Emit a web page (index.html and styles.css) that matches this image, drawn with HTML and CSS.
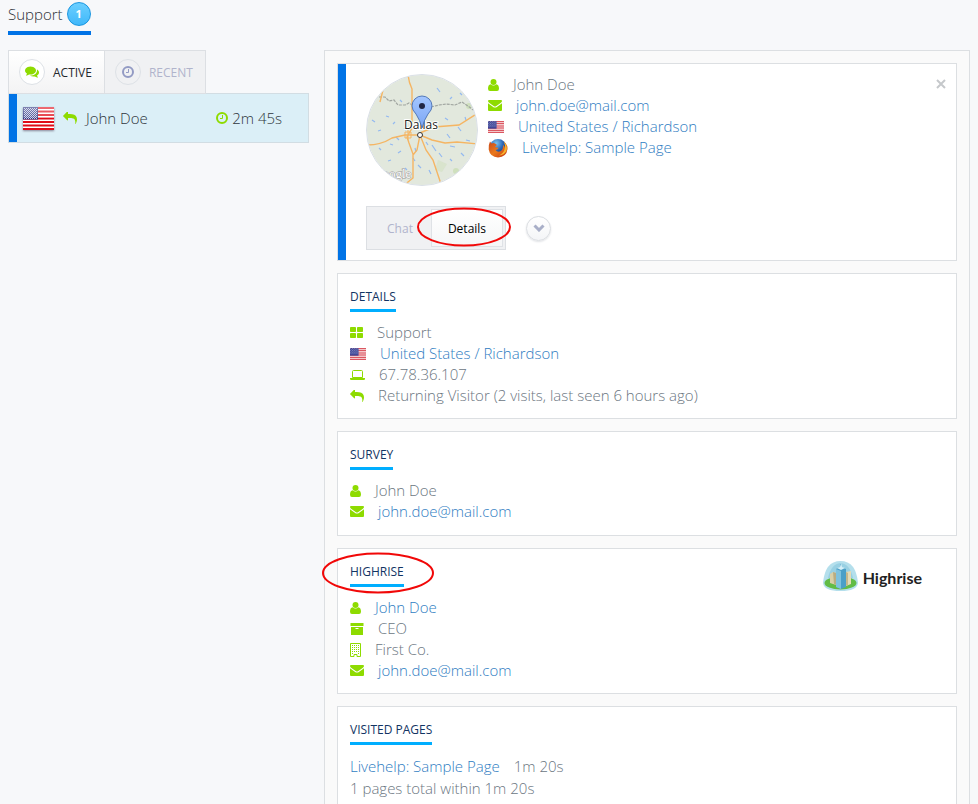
FILE: index.html
```html
<!DOCTYPE html>
<html lang="en">
<head>
<meta charset="utf-8">
<title>Support</title>
<link rel="stylesheet" href="styles.css">
</head>
<body>
<svg class="defs" aria-hidden="true">
  <defs>
    <linearGradient id="pin-fill" x1="0" y1="0" x2="0" y2="1"><stop offset="0" stop-color="#a4c6ff"/><stop offset="1" stop-color="#7ba6f5"/></linearGradient>
    <linearGradient id="flag-shine" x1="0" y1="0" x2="0" y2="1"><stop offset="0" stop-color="#fff" stop-opacity=".4"/><stop offset=".5" stop-color="#fff" stop-opacity=".2"/><stop offset=".5" stop-color="#fff" stop-opacity="0"/></linearGradient>
    <radialGradient id="fox-globe" cx=".4" cy=".25" r=".8"><stop offset="0" stop-color="#7cc4f0"/><stop offset=".5" stop-color="#2b64b4"/><stop offset="1" stop-color="#132b6b"/></radialGradient>
    <linearGradient id="fox-fur" x1="0" y1="0" x2="1" y2="1"><stop offset="0" stop-color="#c8481c"/><stop offset=".5" stop-color="#ea7a1c"/><stop offset="1" stop-color="#c22f10"/></linearGradient>
    <pattern id="stars" width="2" height="2" patternUnits="userSpaceOnUse"><rect width="1" height="1" fill="#c5cae6"/><rect x="1" y="1" width="1" height="1" fill="#c5cae6"/></pattern>
  </defs>
  <symbol id="user" viewBox="0 0 11 12"><circle cx="5.500" cy="3" r="3"/><path d="M2.700 5.200Q5.500 7.800 8.300 5.200Q11 5.600 11 9.700Q11 12 9 12H2Q0 12 0 9.700Q0 5.600 2.700 5.200Z"/></symbol>
  <symbol id="mail" viewBox="0 0 14 11"><path d="M1 0H13Q14 0 14 1Q14 2 12.600 3L8 6.200Q7 6.800 6 6.200L1.400 3Q0 2 0 1Q0 0 1 0ZM0 3.200L5.500 7.200Q7 8 8.500 7.200L14 3.200V10Q14 11 13 11H1Q0 11 0 10Z"/></symbol>
  <symbol id="reply" viewBox="0 128 1792 1536"><path d="M1792 1120q0 166-127 451-3 7-10.500 24t-13.500 30-13 22q-12 17-28 17-15 0-23.500-10t-8.500-25q0-9 2.500-26.500t2.500-23.500q5-68 5-123 0-101-17.500-181t-48.500-138.500-80-101-105.500-69.500-133-42.500-154-21.500-175.500-6h-224v256q0 26-19 45t-45 19-45-19l-512-512q-19-19-19-45t19-45l512-512q19-19 45-19t45 19 19 45v256h224q713 0 875 403 53 134 53 333z"/></symbol>
  <symbol id="comments" viewBox="0 256 1792 1408"><path d="M1408 768q0 139-94 257t-256.500 186.500-353.500 68.500q-86 0-176-16-124 88-278 128-36 9-86 16h-3q-11 0-20.500-8t-11.500-21q-1-3-1-6.500t.5-6.500 2-6l2.500-5 3.500-5.500 4-5 4.500-5 4-4.500q5-6 23-25t26-29.500 22.500-29 25-38.500 20.500-44q-124-72-195-177t-71-224q0-139 94-257t256.500-186.500 353.500-68.500 353.500 68.500 256.500 186.500 94 257zm384 256q0 120-71 224.500t-195 176.500q10 24 20.500 44t25 38.500 22.500 29 26 29.500 23 25q1 1 4 4.500t4.500 5 4 5 3.500 5.500l2.500 5 2 6 .5 6.500-1 6.500q-3 14-13 22t-22 7q-50-7-86-16-154-40-278-128-90 16-176 16-271 0-472-132 58 4 88 4 161 0 309-45t264-129q125-92 192-212t67-254q0-77-23-152 129 71 204 178t75 230z"/></symbol>
  <symbol id="clock" viewBox="0 0 12 12"><circle cx="6" cy="6" r="5" fill="none" stroke="currentColor" stroke-width="2"/><path d="M6.500 3V6.500H4" fill="none" stroke="currentColor"/></symbol>
  <symbol id="windows" viewBox="0 0 13 11"><rect width="6" height="5" rx=".8"/><rect x="7" width="6" height="5" rx=".8"/><rect y="6" width="6" height="5" rx=".8"/><rect x="7" y="6" width="6" height="5" rx=".8"/></symbol>
  <symbol id="laptop" viewBox="0 0 15 10"><path d="M2.500 7.500V1.500Q2.500 .5 3.500 .5H11.500Q12.500 .5 12.500 1.500V7.500Z" fill="none" stroke="currentColor"/><path d="M0 8H15V9Q15 10 13.800 10H1.200Q0 10 0 9Z"/></symbol>
  <symbol id="archive" viewBox="0 0 14 12"><path d="M.5 0H13.500V3H.5ZM1 4H13V12H1ZM5.500 5V6H8.500V5Z" fill-rule="evenodd"/></symbol>
  <symbol id="building" viewBox="0 0 11 14"><path d="M.5 .5H10.500V13.500H7V11.500H4V13.500H.5Z" fill="none" stroke="currentColor"/><path d="M2 2.500H9M2 4.500H9M2 6.500H9M2 8.500H9" fill="none" stroke="currentColor" stroke-dasharray="1 1"/><path d="M2 10H3V11H2ZM8 10H9V11H8Z"/></symbol>
  <symbol id="flag" viewBox="0 0 31 23"><rect width="31" height="23" fill="#fff"/><path d="M0 1H31M0 4.500H31M0 8H31M0 11.500H31M0 15H31M0 18.500H31M0 22H31" stroke="#e00b18" stroke-width="2"/><rect width="15" height="12.500" fill="#2b3480"/><rect x="1" y="1" width="13" height="11" fill="url(#stars)"/><rect width="31" height="23" fill="url(#flag-shine)"/></symbol>
  <symbol id="flag-small" viewBox="0 0 15 11"><rect width="15" height="11" fill="#fff"/><path d="M0 .5H15M0 2.500H15M0 4.500H15M0 6.500H15M0 8.500H15M0 10.500H15" stroke="#d0202e"/><rect width="8" height="7" fill="#27308a"/><rect x="0" y="0" width="8" height="6" fill="url(#stars)" opacity=".6"/></symbol>
</svg>

<header class="topbar">
  <a class="queue" href="#support">Support <span class="count">1</span></a>
</header>

<main class="layout">
  <aside class="visitors">
    <nav class="tabs">
      <button class="tab tab-on" type="button"><span class="disc"><svg class="i-comments"><use href="#comments"/></svg></span>ACTIVE</button>
      <button class="tab" type="button"><span class="disc"><svg class="i-clock"><use href="#clock"/></svg></span>RECENT</button>
    </nav>
    <a class="visitor" href="#john">
      <svg class="i-flag-big"><use href="#flag"/></svg>
      <svg class="i-reply green"><use href="#reply"/></svg>
      <span class="visitor-name">John Doe</span>
      <span class="visitor-time"><svg class="i-clock green"><use href="#clock"/></svg>2m 45s</span>
    </a>
  </aside>

  <section class="panel">
    <article class="card summary">
      <div class="identity">
        <svg class="map" viewBox="0 0 112 112" role="img" aria-label="Map of Dallas">
          <clipPath id="round"><circle cx="56" cy="56" r="55"/></clipPath>
          <g clip-path="url(#round)">
            <rect width="112" height="112" fill="#e2e8dd"/>
            <g fill="#cfe0bd"><circle cx="103" cy="32" r="3"/><circle cx="90" cy="97" r="3"/><path d="M72 86l9 4-5 8-7-2z" opacity=".5"/></g>
            <path d="M6 46l3 2M12 57l3-1M20 42l3 1M24 70l3 1M30 63l3 3M38 54l2 2M32 79l3-2M49 74l1 4M52 91l3 3M60 68l2 3M66 71l4 6M73 79l3 4M81 60l3 4M84 72l5 1M92 53l3 4M95 79l3 3M63 96l2 4M39 94l2 2M27 50l2-2M71 14l3 4M84 25l2-2M94 19l2 2M79 44l3 2M99 43l1 3M34 26l2 2M13 74l2 2M22 87l3-1M100 66l4 1M84 85l2 2M47 84l2 3" fill="none" stroke="#93b9f0" stroke-width="1.200"/>
            <path d="M9 23h10l4 4 5-1 4 5h7l4-2 5 3 6-2M65 33l8-2 7-1 9 1 7-3 6 4 8 6" fill="none" stroke="#a0a5a0" stroke-width="1.200" stroke-dasharray="3 1"/>
            <g fill="none" stroke="#f5b563" stroke-width="1.400"><path d="M42 1Q43 9 46 15V54L41 63 43 69 47 80V104L37 112M17 16L14 28M1 71Q15 71 26 64L39 61 54 61 66 66 79 69 91 68 112 70M54 59L68 53 93 51 112 39M54 61L51 76 47 81M54 61L60 76 67 86 75 110"/><path d="M39 58H45V64H39ZM42 56V66" stroke-width="1"/></g>
            <text class="map-brand" x="7" y="104">Google</text>
            <text class="map-city" x="55" y="55">Dallas</text>
            <path d="M56 54Q54 46 50 40Q46 36 46 32A10 10 0 0 1 66 32Q66 36 62 40Q58 46 56 54Z" fill="url(#pin-fill)" stroke="#5379b9"/>
            <circle cx="56" cy="32" r="3" fill="#202645"/>
            <circle cx="54" cy="61" r="2.500" fill="#fff" stroke="#333"/>
          </g>
          <circle cx="56" cy="56" r="55.500" fill="none" stroke="#d9dfe5"/>
        </svg>
        <ul class="facts">
          <li><svg class="i-user green"><use href="#user"/></svg>John Doe</li>
          <li><svg class="i-mail green"><use href="#mail"/></svg><a href="mailto:john.doe@mail.com">john.doe@mail.com</a></li>
          <li><svg class="i-flag"><use href="#flag-small"/></svg><a href="#place">United States / Richardson</a></li>
          <li><svg class="i-fox" viewBox="0 0 20 20"><circle cx="10" cy="9.500" r="8.500" fill="url(#fox-globe)"/><path d="M2 3.500L3.500 5.500Q5.500 4.500 7 5.500L9 7Q7.500 8 7 9L10.500 10Q9.500 12 7.500 12Q9.500 14.500 12.500 13.200Q15.500 11.500 15 7Q16.800 8 17 10Q17.800 6 15.500 3.500Q20 6.500 19.500 11Q18.500 19 10 19.500Q2 19 .7 11.500Q.2 7 2 3.500Z" fill="url(#fox-fur)"/><path d="M15.500 3.500Q19.500 7 18.700 12Q17 17 11 17.500Q15.500 15 16.500 11.500Q18 7 15.500 3.500Z" fill="#f7b52c"/></svg><a href="#page">Livehelp: Sample Page</a></li>
        </ul>
        <button class="close" type="button" aria-label="Close"><svg viewBox="0 0 10 10"><path d="M1 1L9 9M9 1L1 9"/></svg></button>
      </div>
      <div class="controls">
        <div class="switch">
          <button class="choice" type="button">Chat</button>
          <button class="choice choice-on" type="button">Details</button>
          <svg class="ring ring-choice" viewBox="0 0 94 40"><ellipse cx="47" cy="20" rx="46" ry="18.500"/></svg>
        </div>
        <button class="more" type="button" aria-label="More"><svg viewBox="0 0 12 8"><path d="M1.500 1.500L6 6L10.500 1.500"/></svg></button>
      </div>
    </article>

    <article class="card">
      <h2>DETAILS</h2>
      <ul class="facts">
        <li><svg class="i-windows green"><use href="#windows"/></svg>Support</li>
        <li><svg class="i-flag"><use href="#flag-small"/></svg><a href="#place">United States / Richardson</a></li>
        <li><svg class="i-laptop green"><use href="#laptop"/></svg>67.78.36.107</li>
        <li><svg class="i-reply green"><use href="#reply"/></svg>Returning Visitor (2 visits, last seen 6 hours ago)</li>
      </ul>
    </article>

    <article class="card">
      <h2>SURVEY</h2>
      <ul class="facts">
        <li><svg class="i-user green"><use href="#user"/></svg>John Doe</li>
        <li><svg class="i-mail green"><use href="#mail"/></svg><a href="mailto:john.doe@mail.com">john.doe@mail.com</a></li>
      </ul>
    </article>

    <article class="card crm">
      <div>
        <h2>HIGHRISE<svg class="ring ring-title" viewBox="0 0 112 42"><ellipse cx="56" cy="21" rx="55" ry="19.500"/></svg></h2>
        <ul class="facts">
          <li><svg class="i-user green"><use href="#user"/></svg><a href="#contact">John Doe</a></li>
          <li><svg class="i-archive green"><use href="#archive"/></svg>CEO</li>
          <li><svg class="i-building green"><use href="#building"/></svg>First Co.</li>
          <li><svg class="i-mail green"><use href="#mail"/></svg><a href="mailto:john.doe@mail.com">john.doe@mail.com</a></li>
        </ul>
      </div>
      <div class="brand">
        <svg viewBox="0 0 37 30"><path d="M1 22Q3 0 18.500 0Q34 0 36 22Q35 30 18.500 30Q2 30 1 22Z" fill="#b4dfec"/><path d="M6 17Q9 3 18.500 2Q28 3 31 17Z" fill="#98d0e3"/><ellipse cx="18.500" cy="22" rx="16" ry="6.500" fill="#62bc46"/><path d="M8 13L11 11 14 12V24L8 22Z" fill="#d9d0a8"/><path d="M11 11L14 12V24L12 23Z" fill="#b9ad82"/><path d="M24 11L29 10V23L24 25Z" fill="#e4dbb7"/><path d="M24 11L26 12V24L24 25Z" fill="#c4b78a"/><path d="M14 8L18 6V3H19V6L24 8V26L19 28L14 26Z" fill="#4a9fc7"/><path d="M14 8L19 10V28L14 26Z" fill="#7ec2de"/><path d="M15 7L18 6 19 2 20 6 23 7 19 9Z" fill="#d6f0f8"/></svg>
        <span>Highrise</span>
      </div>
    </article>

    <article class="card">
      <h2>VISITED PAGES</h2>
      <div class="visits">
        <p><a href="#page">Livehelp: Sample Page</a><span>1m 20s</span></p>
        <p>1 pages total within 1m 20s</p>
      </div>
    </article>
  </section>
</main>
</body>
</html>
```
FILE: styles.css
```css
* { box-sizing: border-box; }
body { margin: 0; padding: 2px 8px 0; background: #f7f8fa; color: #6b767f; font: 300 15px/21px "Open Sans", "Noto Sans", sans-serif; }
h2, p, ul { margin: 0; padding: 0; }
ul { list-style: none; }
a { color: #2f7dc2; text-decoration: none; }
button { padding: 0; font: inherit; cursor: pointer; }
svg { flex: none; fill: currentColor; }
.defs { position: absolute; width: 0; height: 0; }
.green { color: #8edb00; }

.i-user { width: 11px; height: 12px; }
.i-mail { width: 14px; height: 11px; }
.i-reply { width: 14px; height: 12px; }
.i-comments { width: 14px; height: 12px; }
.i-clock { width: 12px; height: 12px; }
.i-windows { width: 13px; height: 11px; }
.i-laptop { width: 15px; height: 10px; }
.i-archive { width: 14px; height: 12px; }
.i-building { width: 11px; height: 14px; }
.i-flag { width: 16px; height: 12px; }
.i-fox { width: 20px; height: 20px; }
.i-flag-big { width: 31px; height: 23px; box-shadow: 0 1px 2px #889; }

.topbar { display: flex; margin-bottom: 15px; }
.queue { display: flex; gap: 4px; height: 33px; border-bottom: 4px solid #0073e6; color: #2c3036; line-height: 24px; }
.count { width: 24px; height: 24px; border: 1px solid #1996e0; border-radius: 50%; background: linear-gradient(#6bcfff, #40b8fa); color: #fff; font-size: 11px; font-weight: 700; line-height: 22px; text-align: center; }

.layout { display: grid; grid-template-columns: 301px minmax(0, 1fr); gap: 15px; align-items: start; }
.tabs { display: flex; }
.tab { display: flex; align-items: center; gap: 8px; height: 44px; padding: 0 12px 0 10px; border: 1px solid #dcdfe3; border-left-width: 0; background: #f0f1f3; color: #b0b4cc; font-size: 12px; font-weight: 400; }
.tab-on { border-left-width: 1px; background: linear-gradient(#fff, #f3f3f4); color: #25282d; }
.disc { display: flex; align-items: center; justify-content: center; width: 26px; height: 26px; border: 1px solid #dde1e6; border-radius: 50%; color: #939bc4; }
.tab-on .disc { background: #fff; color: #8edb00; }
.visitor { display: flex; align-items: center; height: 50px; margin-top: -1px; padding: 0 26px 0 14px; border: 1px solid #d2dde3; box-shadow: inset 8px 0 #0073e6; background: #dbeff7; color: #2f363d; }
.visitor .i-reply { margin: 0 9px; }
.visitor-time { display: flex; align-items: center; gap: 4px; margin-left: auto; }

.panel { display: grid; gap: 12px; padding: 12px; border: 1px solid #dcdfe2; background: #fafafa; }
.card { min-height: 105px; padding: 12px; border: 1px solid #dcdfe2; background: #fff; }
.card h2 { position: relative; width: max-content; margin-bottom: 10px; padding-bottom: 1px; border-bottom: 3px solid #00aeff; color: #123463; font-size: 12px; font-weight: 400; line-height: 22px; }
.facts li { display: flex; align-items: center; gap: 14px; height: 21px; }

.summary { padding: 10px 10px 10px 28px; box-shadow: inset 8px 0 #0073e6; }
.identity { display: flex; align-items: flex-start; gap: 10px; }
.map { width: 112px; height: 112px; }
.map-city { fill: #222; stroke: #fff; stroke-width: 2px; paint-order: stroke; font: 400 12px "Open Sans", sans-serif; text-anchor: middle; }
.map-brand { fill: #fff; stroke: #999; stroke-width: 1px; paint-order: stroke; font: 400 13px "Liberation Serif", serif; }
.close { width: 10px; height: 20px; margin-left: auto; border: 0; background: none; }
.close svg { display: block; width: 10px; height: 10px; fill: none; stroke: #c5c8cb; stroke-width: 2px; }
.controls { display: flex; align-items: center; gap: 20px; margin-top: 20px; }
.switch { position: relative; display: flex; width: 140px; height: 44px; padding: 2px; border: 1px solid #dcdfe3; background: #f0f1f3; }
.choice { width: 62px; border: 0; background: none; color: #b0b4cc; font-size: 12px; font-weight: 400; }
.choice-on { flex: 1; border: 1px solid #dfe2e6; background: linear-gradient(#fff, #f5f6f7); color: #000; }
.more { display: flex; align-items: center; justify-content: center; width: 25px; height: 25px; border: 1px solid #dadde1; border-radius: 50%; background: linear-gradient(#fff, #f4f5f7); box-shadow: 0 1px 2px #e1e3e6; }
.more svg { width: 12px; height: 8px; fill: none; stroke: #a9afc8; stroke-width: 3px; }
.ring { position: absolute; fill: none; stroke: #f10808; stroke-width: 2px; pointer-events: none; }
.ring-choice { top: 0; left: 50px; width: 94px; height: 40px; }
.ring-title { top: -9px; left: -28px; width: 112px; height: 42px; }

.crm { display: flex; justify-content: space-between; align-items: flex-start; }
.brand { display: flex; align-items: flex-end; gap: 4px; padding-right: 22px; color: #222; font: 700 16px/26px Lato, sans-serif; }
.brand svg { width: 37px; height: 30px; }
.visits p { display: flex; gap: 14px; line-height: 22px; }
```
